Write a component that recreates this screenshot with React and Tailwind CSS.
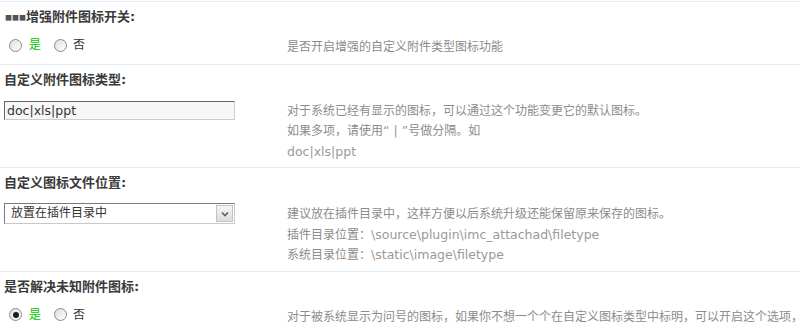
import React from 'react';

function Radio({ checked }) {
  return (
    <span className="w-[13px] h-[13px] rounded-full border border-[#8a8a8a] bg-[linear-gradient(135deg,#dedede,#ffffff)] flex items-center justify-center shrink-0">
      {checked && <span className="w-[6px] h-[6px] rounded-full bg-[#1c1c1c]"></span>}
    </span>
  );
}

function YesNo({ value }) {
  return (
    <div className="pl-[9px] flex items-center h-[14px] leading-[14px]">
      <Radio checked={value === 1} />
      <span className="ml-[7px] text-[#00c800]">是</span>
      <span className="ml-[13px]"><Radio checked={value === 0} /></span>
      <span className="ml-[6px] text-[#333]">否</span>
    </div>
  );
}

function Setting({ title, left, children }) {
  return (
    <div className="border-t border-[#deeffb] pt-[7px] pb-[5px]">
      <div className="pl-[4px] font-bold text-[13px] leading-4 text-[#3a3a3a] whitespace-nowrap">{title}</div>
      <div className="mt-[13px] flex">
        <div className="w-[287px] shrink-0">{left}</div>
        <div className="leading-[20.5px] text-[#8c8c8c] whitespace-nowrap">{children}</div>
      </div>
    </div>
  );
}

const latin = "text-[12.5px] text-[#9a9a9a]";

export default function App() {
  return (
    <div className="w-[800px] h-[333px] overflow-hidden bg-white pt-px text-[12px] font-['DejaVu_Sans','Noto_Sans_CJK_SC',sans-serif]">
      <Setting
        title={<><span className="pl-px font-['Noto_Sans_CJK_SC'] text-[7px] font-normal text-[#555] align-[1px]">■■■</span>增强附件图标开关:</>}
        left={<YesNo value={-1} />}
      >
        <div className="-mt-[1px] mb-[1px]">是否开启增强的自定义附件类型图标功能</div>
      </Setting>

      <Setting
        title="自定义附件图标类型:"
        left={
          <div className="ml-[4px] w-[231px] h-[19px] border border-[#cccccc] border-t-[#666666] border-l-[#666666] bg-[#f7f7f7] pl-[2px] text-[12.5px] leading-[17px] text-[#333]">
            doc|xls|ppt
          </div>
        }
      >
        <div>对于系统已经有显示的图标，可以通过这个功能变更它的默认图标。</div>
        <div>如果多项，请使用<span className={latin}>“ | ”</span>号做分隔。如</div>
        <div className={latin}>doc|xls|ppt</div>
      </Setting>

      <Setting
        title="自定义图标文件位置:"
        left={
          <div className="ml-[4px] -mt-[1px] w-[231px] h-[21px] border border-[#c8c8c8] border-t-[#7a7a7a] border-l-[#7a7a7a] bg-white flex items-center">
            <span className="pl-[6px] text-[#333] leading-[19px]">放置在插件目录中</span>
            <span className="ml-auto mr-[1px] w-[17px] h-[17px] border border-[#c3c3c3] bg-[linear-gradient(#f6f6f6,#dcdcdc)] flex items-center justify-center">
              <svg width="8" height="6" viewBox="0 0 8 6">
                <path d="M1 1.5 L4 4.5 L7 1.5" fill="none" stroke="#4d5f80" strokeWidth="1.6" />
              </svg>
            </span>
          </div>
        }
      >
        <div>建议放在插件目录中，这样方便以后系统升级还能保留原来保存的图标。</div>
        <div>插件目录位置：<span className={latin}>\source\plugin\imc_attachad\filetype</span></div>
        <div>系统目录位置：<span className={latin}>\static\image\filetype</span></div>
      </Setting>

      <Setting title="是否解决未知附件图标:" left={<YesNo value={1} />}>
        <div className="-mt-[1px]">对于被系统显示为问号的图标，如果你不想一个个在自定义图标类型中标明，可以开启这个选项，</div>
      </Setting>
    </div>
  );
}
